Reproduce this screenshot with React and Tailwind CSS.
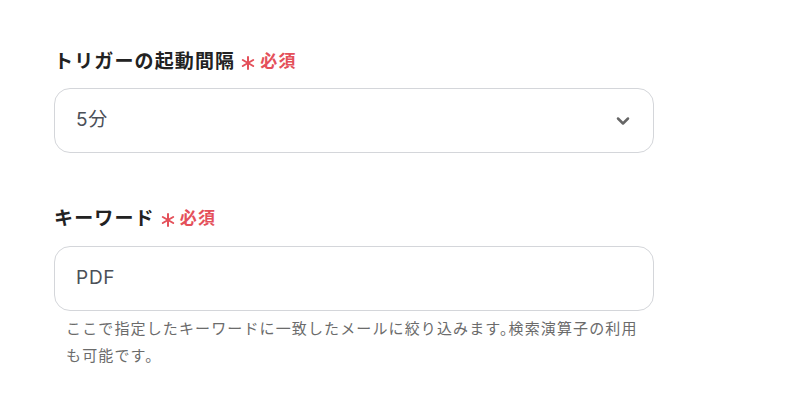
import { ChevronDown } from "lucide-react";

const font = { fontFamily: '"Noto Sans", "Noto Sans CJK JP", sans-serif' };
const valueFont = { fontFamily: 'Inter, "Noto Sans CJK JP", sans-serif' };

// six-spoke red asterisk
const Asterisk = () => (
  <svg width="14" height="14" viewBox="0 0 14 14" className="shrink-0">
    <g stroke="#e4505a" strokeWidth="2" strokeLinecap="round">
      <line x1="7" y1="1" x2="7" y2="13" />
      <line x1="1.8" y1="4" x2="12.2" y2="10" />
      <line x1="1.8" y1="10" x2="12.2" y2="4" />
    </g>
  </svg>
);

// required label: title + red asterisk + 必須
const FieldLabel = ({ children, className = "" }) => (
  <div className={`flex items-center h-[28px] ${className}`}>
    <span className="text-[19px] font-bold tracking-[0.06em] text-[#222]">
      {children}
    </span>
    <span className="ml-[6px] mt-[3px]">
      <Asterisk />
    </span>
    <span className="ml-[5px] text-[17px] font-bold text-[#e4505a] tracking-[0.07em]">
      必須
    </span>
  </div>
);

export default function App() {
  return (
    <div className="min-h-screen w-full bg-white" style={font}>
      <div className="pl-[54px] pt-[47px] w-[654px]">

        {/* trigger interval */}
        <FieldLabel>トリガーの起動間隔</FieldLabel>
        <div className="mt-[13px] h-[65px] w-[600px] rounded-[16px] border border-[#d4d6da] flex items-center pl-[21px] pr-[20px]">
          <span className="flex-1 text-[19px] tracking-[0.04em] text-[#4b5058]" style={valueFont}>5分</span>
          <ChevronDown size={20} strokeWidth={3} className="text-[#666]" />
        </div>

        {/* keyword */}
        <FieldLabel className="mt-[51px]">キーワード</FieldLabel>
        <div className="mt-[14px] h-[65px] w-[600px] rounded-[16px] border border-[#d4d6da] flex items-center pl-[21px]">
          <span className="text-[19px] tracking-[0.04em] text-[#4b5058]" style={valueFont}>PDF</span>
        </div>
        <p className="mt-[4px] px-[12px] w-[600px] text-[15px] leading-[27px] tracking-[0.075em] text-[#6b6b6b] [font-feature-settings:'halt']">
          ここで指定したキーワードに一致したメールに絞り込みます。検索演算子の利用も可能です。
        </p>
      </div>
    </div>
  );
}
